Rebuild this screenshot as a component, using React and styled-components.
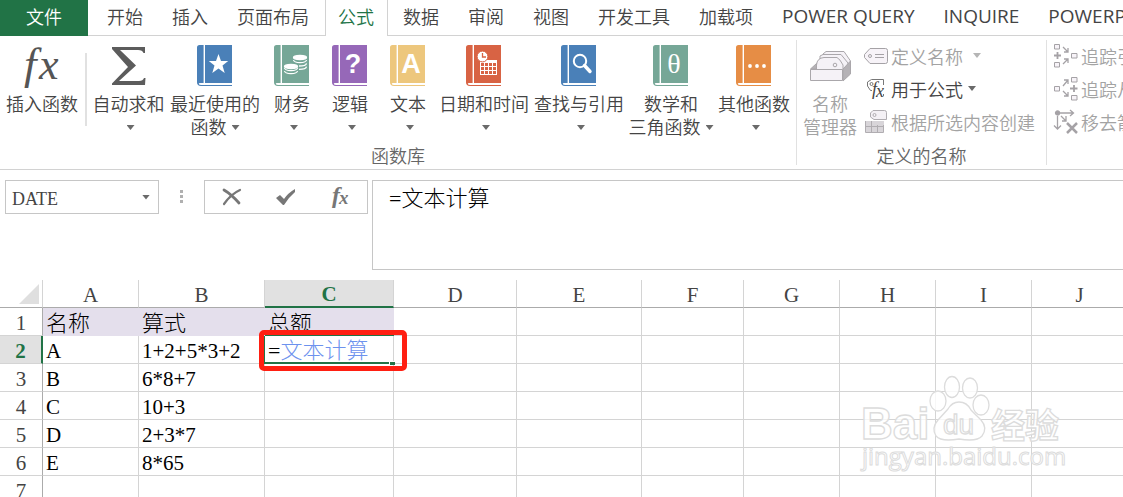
import React from "react";
import styled, { createGlobalStyle, css } from "styled-components";

const GlobalStyle = createGlobalStyle`
  * {
    box-sizing: border-box;
  }
  body {
    margin: 0;
    background: #fff;
    color: #444;
    font-family: "Open Sans", "Noto Sans CJK SC", sans-serif;
  }
  button {
    border: 0;
    margin: 0;
    padding: 0;
    background: none;
    color: inherit;
    font: inherit;
  }
  svg {
    overflow: visible;
  }
`;

const sheetFont = css`
  font-family: "Liberation Serif", "Noto Sans CJK SC", serif;
`;

const Window = styled.div`
  position: relative;
  display: flex;
  flex-direction: column;
  height: 100vh;
  overflow: hidden;
`;

/* ---------- tabs ---------- */

const TabBar = styled.nav`
  display: flex;
  flex: none;
  height: 36px;
  overflow: hidden;
  box-shadow: inset 0 -1px #d2d2d2;
`;

const FileTab = styled.button`
  flex: none;
  width: 88px;
  margin-right: 5px;
  padding-bottom: 5px;
  background: #217346;
  color: #fff;
  font-size: 18px;
  font-weight: 350;
`;

const Tab = styled.button`
  flex: none;
  margin: 0 1px;
  padding: 0 13px 5px 12px;
  border: 1px solid transparent;
  border-width: 0 1px;
  font-size: ${({ $latin }) => ($latin ? "19px" : "18px")};
  font-weight: ${({ $latin }) => ($latin ? 400 : 350)};
  white-space: nowrap;
  ${({ $active }) =>
    $active &&
    css`
      border-color: #d2d2d2;
      background: #fff;
      color: #217346;
    `}
`;

/* ---------- ribbon ---------- */

const Ribbon = styled.div`
  display: flex;
  flex: none;
  height: 134px;
  border-bottom: 1px solid #d2d2d2;
  overflow: hidden;
  font-size: 18px;
  font-weight: 350;
`;

const Group = styled.section`
  display: flex;
  flex: none;
  flex-direction: column;
`;

const GroupBody = styled.div`
  display: flex;
  height: 108px;
  padding: ${({ $start, $end }) => `0 ${$end || 0}px 0 ${$start || 0}px`};
`;

const GroupLabel = styled.div`
  line-height: 24px;
  text-align: center;
  color: #666;
`;

const Separator = styled.div`
  flex: none;
  width: ${({ $wide }) => ($wide ? "2px" : "1px")};
  margin: ${({ $wide }) => ($wide ? "17px 3px 0 1px" : "4px 0")};
  height: ${({ $wide }) => ($wide ? "73px" : "auto")};
  background: #e1e1e1;
`;

const BigButton = styled.button`
  display: flex;
  flex: none;
  flex-direction: column;
  align-items: center;
  width: ${({ $width }) => $width}px;
  padding-top: 9px;
  line-height: 23px;
  white-space: nowrap;
  color: ${({ disabled }) => (disabled ? "#a3a3a3" : "#444")};
  svg {
    flex: none;
  }
`;

const LabelLine = styled.span`
  display: flex;
  align-items: center;
  gap: 5px;
  height: 23px;
`;

const FirstLine = styled(LabelLine)`
  margin-top: 7px;
`;

const SmallList = styled.div`
  display: flex;
  flex-direction: column;
  padding: 3px 0 0 2px;
`;

const SmallButton = styled.button`
  display: flex;
  align-items: center;
  gap: 3px;
  height: 33px;
  white-space: nowrap;
  color: ${({ disabled }) => (disabled ? "#a3a3a3" : "#444")};
`;

const Caret = styled.span`
  width: 8px;
  height: 5px;
  margin-left: ${({ $gap }) => $gap || 0}px;
  background: ${({ $muted }) => ($muted ? "#b5b5b5" : "#6a6a6a")};
  clip-path: polygon(0 0, 100% 0, 50% 100%);
`;

/* ---------- formula bar ---------- */

const FormulaBar = styled.div`
  display: flex;
  flex: none;
  align-items: flex-start;
  height: 110px;
  padding: 10px 0 0 5px;
`;

const NameBox = styled.div`
  display: flex;
  align-items: center;
  width: 154px;
  height: 34px;
  padding-right: 8px;
  border: 1px solid #c6c6c6;
`;

const NameInput = styled.input`
  flex: 1;
  min-width: 0;
  padding: 4px 0 0 6px;
  border: 0;
  outline: 0;
  background: none;
  color: #444;
  ${sheetFont}
  font-size: 18px;
`;

const Dots = styled.div`
  display: flex;
  flex-direction: column;
  gap: 2px;
  width: 45px;
  padding: 10px 0 0 21px;
  i {
    width: 3px;
    height: 3px;
    background: #b0b0b0;
  }
`;

const EntryButtons = styled.div`
  display: flex;
  width: 164px;
  height: 34px;
  margin-right: 4px;
  border: 1px solid #c6c6c6;
`;

const EntryButton = styled.button`
  display: flex;
  flex: 1;
  align-items: center;
  justify-content: center;
`;

const FormulaInput = styled.textarea`
  flex: 1;
  min-width: 0;
  height: 90px;
  padding: 2px 0 0 16px;
  border: 1px solid #c6c6c6;
  border-right: 0;
  outline: 0;
  resize: none;
  color: #000;
  ${sheetFont}
  font-size: 22px;
  font-weight: 300;
  line-height: 32px;
`;

/* ---------- sheet ---------- */

const Sheet = styled.div`
  flex: 1;
  min-height: 0;
  overflow: hidden;
`;

const Grid = styled.table`
  table-layout: fixed;
  width: 1224px;
  border-collapse: separate;
  border-spacing: 0;
  ${sheetFont}
  font-size: 21px;
  line-height: 23px;
`;

const Col = styled.col`
  width: ${({ $width }) => $width}px;
`;

const ColHead = styled.th`
  height: 28px;
  padding: 4px 0 0;
  border-right: 1px solid #d4d4d4;
  border-bottom: 1px solid #ababab;
  font-weight: 400;
  ${({ $active }) =>
    $active &&
    css`
      padding-top: 3px;
      border-bottom: 2px solid #217346;
      background: #e1e1e1;
      color: #217346;
      font-weight: 700;
    `}
`;

const Corner = styled.td`
  padding: 0 3px 3px 0;
  border-right: 1px solid #d4d4d4;
  border-bottom: 1px solid #ababab;
  line-height: 0;
  text-align: right;
  vertical-align: bottom;
`;

const RowHead = styled.th`
  height: 28px;
  padding: 4px 0 0;
  border-right: 1px solid #ababab;
  border-bottom: 1px solid #d4d4d4;
  font-weight: 400;
  ${({ $active }) =>
    $active &&
    css`
      border-right: 2px solid #217346;
      background: #e1e1e1;
      color: #217346;
      font-weight: 700;
    `}
`;

const Cell = styled.td`
  height: 28px;
  padding: 4px 0 0 3px;
  border-right: 1px solid #d4d4d4;
  border-bottom: 1px solid #d4d4d4;
  color: #000;
  font-weight: 300;
  white-space: nowrap;
  ${({ $title }) =>
    $title &&
    css`
      border-color: #e4dfec;
      background: #e4dfec;
      font-size: 22px;
    `}
`;

const EditCell = styled(Cell)`
  position: relative;
  padding-top: 3px;
  border-bottom: 2px solid #217346;
  box-shadow: 0 -1px #217346, -1px 0 #217346;
  font-size: 22px;
  span {
    color: #6d92ee;
  }
`;

const Handle = styled.i`
  position: absolute;
  right: -2px;
  bottom: -3px;
  width: 6px;
  height: 4px;
  border: 1px solid #fff;
  border-width: 1px 0 0 1px;
  background: #217346;
`;

const RedFrame = styled.div`
  position: absolute;
  inset: -6px -14px -9px -6px;
  border: 5px solid #ff1f12;
  border-radius: 5px;
`;

const Watermark = styled.svg`
  position: absolute;
  right: 56px;
  bottom: 20px;
  pointer-events: none;
  fill: #fff;
  fill-opacity: 0.8;
  stroke: #dcdcdc;
  stroke-width: 1.3;
`;

/* ---------- icons ---------- */

const BookIcon = ({ color, children }) => (
  <svg width="36" height="41" viewBox="0 0 36 41">
    <path d="M2.5 0H6.6V38H3Q1.5 38 1.5 39.2L0 37.5V2.5Q0 0 2.5 0Z" fill={color} />
    <path d="M8 0H35V38H8ZM0 37Q0 41 4 41H35V40H4Q1.5 40 1.5 38Z" fill={color} />
    {children}
  </svg>
);

const FxIcon = () => (
  <svg width="38" height="41" viewBox="0 0 38 41" fontFamily="Liberation Serif" fontStyle="italic" fill="#555">
    <text x="1" y="34" fontSize="45">f</text>
    <text x="16" y="34" fontSize="44">x</text>
  </svg>
);

const SumIcon = () => (
  <svg width="36" height="41" viewBox="0 0 36 41">
    <path d="M1 2H34V8H32.5Q31.5 5 27 5H9L25 20.5L8 36H28Q32 36 33 33H34.5L34 40H1V38.5L17 22L1 4Z" fill="#5c5c5c" />
  </svg>
);

const RecentIcon = () => (
  <BookIcon color="#4a80b8">
    <path d="M21.5 9L24 16H31.2L25.5 20.4L27.7 28L21.5 23.5L15.3 28L17.5 20.4L11.8 16H19Z" fill="#fff" />
  </BookIcon>
);

const FinanceIcon = () => (
  <BookIcon color="#76a797">
    <g stroke="#fff" fill="none" strokeWidth="1.3">
      <ellipse cx="26" cy="12.5" rx="6.5" ry="2" fill="#fff" />
      <path d="M19.5 15Q20 17.6 26 17.6T32.5 15M25 21Q32 21 32.5 18.3M25 24.4Q32 24.4 32.5 21.7" />
      <ellipse cx="17" cy="21.5" rx="6.5" ry="2" fill="#fff" />
      <path d="M10.5 23Q11 25.6 17 25.6T23.5 23M10.5 26Q11 28.6 17 28.6T23.5 26" />
    </g>
  </BookIcon>
);

const LetterIcon = ({ color, letter, serif }) => (
  <BookIcon color={color}>
    <text
      x="21"
      y="28"
      textAnchor="middle"
      fill="#fff"
      fontSize={serif ? 28 : 27}
      fontWeight={serif ? 400 : 700}
      fontFamily={serif ? "Liberation Serif" : "Liberation Sans"}
    >
      {letter}
    </text>
  </BookIcon>
);

const DateIcon = () => (
  <BookIcon color="#d86344">
    <path d="M14 15H31V30H14Z" fill="#fff" />
    <g fill="#d86344">
      {[18, 22, 26].map((y) =>
        [15, 19, 23, 27].map((x) => <rect key={`${x}-${y}`} x={x} y={y} width="3" height="3" />)
      )}
    </g>
    <circle cx="16.5" cy="11.5" r="5.4" fill="#fff" stroke="#d86344" />
    <path d="M16.5 8V12H20" fill="none" stroke="#d86344" strokeWidth="1.3" />
  </BookIcon>
);

const LookupIcon = () => (
  <BookIcon color="#4a80b8">
    <circle cx="19" cy="16" r="6.2" fill="none" stroke="#fff" strokeWidth="2" />
    <path d="M23.5 20.5L29 26.5" stroke="#fff" strokeWidth="3.4" strokeLinecap="round" />
  </BookIcon>
);

const MoreIcon = () => (
  <BookIcon color="#e68d45">
    <g fill="#fff">
      <circle cx="14" cy="21" r="1.9" />
      <circle cx="21" cy="21" r="1.9" />
      <circle cx="28" cy="21" r="1.9" />
    </g>
  </BookIcon>
);

const ManagerIcon = () => (
  <svg width="41" height="41" viewBox="0 0 41 41" fill="#f5f2f7" stroke="#aaa7ab">
    <path d="M13 18V9L16 6.5H34L40.5 16V20L33 24Z" />
    <path d="M10 20V11L13 9.5H31L38 18V22L32 24Z" />
    <path d="M6.5 25V20Q7 13 14 12.5H27Q30 14 33 20V25Z" />
    <circle cx="25" cy="20" r="1.8" />
    <path d="M33 24L40.5 16V29L33 36Z" fill="#b5b2b6" />
    <path d="M0.5 24L6.5 18.5V24Z" fill="#b5b2b6" />
    <path d="M0.5 24.5H32.5V35.5H0.5Z" />
  </svg>
);

const TagIcon = () => (
  <svg width="24" height="24" viewBox="0 0 24 24" fill="#f7f3f8" stroke="#a5a2a6">
    <path d="M6 4.5H21.5Q23.5 4.5 23.5 6.5V17.5Q23.5 19.5 21.5 19.5H6L0.5 13.5V10.5Z" />
    <circle cx="6" cy="12" r="1.5" />
    <path d="M11 10.5H20M11 13.5H20" />
  </svg>
);

const UseIcon = () => (
  <svg width="24" height="24" viewBox="0 0 24 24">
    <path d="M8 13.5H6.5L3.5 9V5L7.5 2.5H19.5V8M19.5 17V19" fill="none" stroke="#777" />
    <circle cx="7.5" cy="7" r="1.5" fill="none" stroke="#777" />
    <g fontFamily="Liberation Serif" fontStyle="italic" fontSize="18" fill="#444">
      <text x="8" y="18">f</text>
      <text x="12" y="20">x</text>
    </g>
  </svg>
);

const CreateIcon = () => (
  <svg width="24" height="24" viewBox="0 0 24 24" fill="#f4f1f5" stroke="#b0adb1">
    <path d="M1 11H20V22H1Z" fill="#d8d5d9" stroke="none" />
    <path d="M1.5 11V22.5H19.5V15M1.5 16.5H19.5M7.5 11V22M13.5 15V22" fill="none" />
    <path d="M9 0.5H20.5Q22.5 0.5 22.5 2.5V9.5H10L6.5 7V3Z" />
    <circle cx="10.5" cy="5" r="1.5" />
  </svg>
);

const PrecedentsIcon = () => (
  <svg width="24" height="24" viewBox="0 0 24 24" fill="none" stroke="#a5a2a6">
    <path d="M0.5 0.5H5.5V5H0.5ZM0.5 18.5H5.5V23H0.5ZM17.5 9.5H23V14H17.5Z" fill="#f7f3f8" />
    <path d="M3.5 8V15M0 11.5H7" strokeWidth="1.8" />
    <path d="M9 3L14 8M14 4V8H10M9 20L14 15M10 15H14V19" strokeWidth="1.3" />
  </svg>
);

const DependentsIcon = () => (
  <svg width="24" height="24" viewBox="0 0 24 24" fill="none" stroke="#a5a2a6">
    <path d="M17.5 0.5H23V5H17.5ZM17.5 18.5H23V23H17.5ZM0.5 9.5H5.5V14H0.5Z" fill="#f7f3f8" />
    <path d="M20 8V15M16 11.5H23.5" strokeWidth="1.8" />
    <path d="M9 9L14 3M10 3H14V7M9 14L14 19M14 15V19H10" strokeWidth="1.3" />
  </svg>
);

const RemoveIcon = () => (
  <svg width="24" height="24" viewBox="0 0 24 24" fill="none" stroke="#a5a2a6" strokeWidth="1.3">
    <circle cx="3.5" cy="3" r="2" fill="#a5a2a6" />
    <path d="M6 3H19M16 0L19.5 3L16 6M3.5 6V19M0 15.5L3.5 19L7 15.5M7 6L12 11M12 6V11H8" />
    <path d="M13 13L23 23M23 13L13 23" strokeWidth="2.5" />
  </svg>
);

/* ---------- data ---------- */

const tabs = ["开始", "插入", "页面布局", "公式", "数据", "审阅", "视图", "开发工具", "加载项", "POWER QUERY", "INQUIRE", "POWERPIVOT"];

const library = [
  { label: "自动求和", width: 77, icon: <SumIcon /> },
  { label: "最近使用的", second: "函数", width: 96, icon: <RecentIcon /> },
  { label: "财务", width: 58, icon: <FinanceIcon /> },
  { label: "逻辑", width: 58, icon: <LetterIcon color="#9668b8" letter="?" /> },
  { label: "文本", width: 58, icon: <LetterIcon color="#edc77d" letter="A" /> },
  { label: "日期和时间", width: 94, icon: <DateIcon /> },
  { label: "查找与引用", width: 96, icon: <LookupIcon /> },
  { label: "数学和", second: "三角函数", width: 88, icon: <LetterIcon color="#76a797" letter="θ" serif /> },
  { label: "其他函数", width: 78, icon: <MoreIcon /> },
];

const columns = [
  ["A", 96],
  ["B", 126],
  ["C", 129],
  ["D", 123],
  ["E", 125],
  ["F", 102],
  ["G", 96],
  ["H", 96],
  ["I", 96],
  ["J", 96],
  ["K", 96],
];

const rows = [
  ["名称", "算式", "总额"],
  ["A", "1+2+5*3+2", "文本计算"],
  ["B", "6*8+7"],
  ["C", "10+3"],
  ["D", "2+3*7"],
  ["E", "8*65"],
  [],
  [],
  [],
];

const SheetCell = ({ row, col }) => {
  const value = rows[row][col];
  if (row === 1 && col === 2) {
    return (
      <EditCell>
        =<span>{value}</span>
        <Handle />
        <RedFrame />
      </EditCell>
    );
  }
  return <Cell $title={row === 0 && col < 3}>{value}</Cell>;
};

const App = () => {
  return (
    <Window>
      <GlobalStyle />
      <TabBar>
        <FileTab>文件</FileTab>
        {tabs.map((tab) => (
          <Tab key={tab} $active={tab === "公式"} $latin={/^[A-Z]/.test(tab)}>
            {tab}
          </Tab>
        ))}
      </TabBar>

      <Ribbon>
        <Group>
          <GroupBody $end={3}>
            <BigButton $width={84}>
              <FxIcon />
              <FirstLine>插入函数</FirstLine>
            </BigButton>
            <Separator $wide />
            {library.map(({ label, second, width, icon }) => (
              <BigButton key={label} $width={width}>
                {icon}
                <FirstLine>{label}</FirstLine>
                <LabelLine>
                  {second}
                  <Caret $gap={second ? 0 : 4} />
                </LabelLine>
              </BigButton>
            ))}
          </GroupBody>
          <GroupLabel>函数库</GroupLabel>
        </Group>
        <Separator />
        <Group>
          <GroupBody $start={1} $end={11}>
            <BigButton $width={64} disabled>
              <ManagerIcon />
              <FirstLine>名称</FirstLine>
              <LabelLine>管理器</LabelLine>
            </BigButton>
            <SmallList>
              <SmallButton disabled>
                <TagIcon />
                定义名称
                <Caret $gap={7} $muted />
              </SmallButton>
              <SmallButton>
                <UseIcon />
                用于公式
                <Caret $gap={2} />
              </SmallButton>
              <SmallButton disabled>
                <CreateIcon />
                根据所选内容创建
              </SmallButton>
            </SmallList>
          </GroupBody>
          <GroupLabel>定义的名称</GroupLabel>
        </Group>
        <Separator />
        <Group>
          <GroupBody $start={5}>
            <SmallList>
              <SmallButton disabled>
                <PrecedentsIcon />
                追踪引用单元格
              </SmallButton>
              <SmallButton disabled>
                <DependentsIcon />
                追踪从属单元格
              </SmallButton>
              <SmallButton disabled>
                <RemoveIcon />
                移去箭头
              </SmallButton>
            </SmallList>
          </GroupBody>
        </Group>
      </Ribbon>

      <FormulaBar>
        <NameBox>
          <NameInput aria-label="名称框" defaultValue="DATE" />
          <Caret />
        </NameBox>
        <Dots>
          <i />
          <i />
          <i />
        </Dots>
        <EntryButtons>
          <EntryButton aria-label="取消">
            <svg width="20" height="18" viewBox="0 0 20 18" fill="none" stroke="#777" strokeLinecap="round">
              <path d="M2 2Q9 6 17 15" strokeWidth="2.8" />
              <path d="M18 2Q9 6 2 16" strokeWidth="2.2" />
            </svg>
          </EntryButton>
          <EntryButton aria-label="输入">
            <svg width="20" height="18" viewBox="0 0 20 18" fill="#777">
              <path d="M0 10L4 7L8 11Q12 5 19 1V4Q13 9 8 17H7Z" />
            </svg>
          </EntryButton>
          <EntryButton aria-label="插入函数">
            <svg width="20" height="24" viewBox="0 0 20 24" fontFamily="Liberation Serif" fontStyle="italic" fontWeight="700" fill="#777">
              <text x="2" y="18" fontSize="24">f</text>
              <text x="9" y="19" fontSize="19">x</text>
            </svg>
          </EntryButton>
        </EntryButtons>
        <FormulaInput aria-label="编辑栏" defaultValue="=文本计算" />
      </FormulaBar>

      <Sheet>
        <Grid>
          <colgroup>
            <Col $width={43} />
            {columns.map(([name, width]) => (
              <Col key={name} $width={width} />
            ))}
          </colgroup>
          <thead>
            <tr>
              <Corner>
                <svg width="20" height="20" viewBox="0 0 20 20">
                  <path d="M20 0V20H0Z" fill="#dfdfdf" />
                </svg>
              </Corner>
              {columns.map(([name]) => (
                <ColHead key={name} scope="col" $active={name === "C"}>
                  {name}
                </ColHead>
              ))}
            </tr>
          </thead>
          <tbody>
            {rows.map((_, row) => (
              <tr key={row}>
                <RowHead scope="row" $active={row === 1}>
                  {row + 1}
                </RowHead>
                {columns.map(([name], col) => (
                  <SheetCell key={name} row={row} col={col} />
                ))}
              </tr>
            ))}
          </tbody>
        </Grid>
      </Sheet>

      <Watermark width="206" height="104" viewBox="0 0 206 104">
        <text x="0" y="66" fontFamily="Liberation Sans" fontWeight="700" fontSize="44">Bai</text>
        <ellipse cx="77" cy="28" rx="8" ry="10" />
        <ellipse cx="91" cy="14" rx="7.5" ry="10.5" />
        <ellipse cx="109" cy="15" rx="7.5" ry="10" />
        <ellipse cx="120" cy="32" rx="8" ry="10" />
        <path d="M98 29Q106 29 110 37L120 47Q127 55 121 63Q116 69 98 66Q80 69 75 63Q70 55 77 47L87 36Q91 29 98 29Z" />
        <text x="82" y="61" fontFamily="Liberation Sans" fontSize="28">du</text>
        <text x="130" y="65" fontFamily="Noto Sans CJK SC" fontWeight="700" fontSize="34">经验</text>
        <text x="1" y="92" fontFamily="Open Sans" fontSize="24" strokeWidth="1">jingyan.baidu.com</text>
      </Watermark>
    </Window>
  );
};

export default App;
